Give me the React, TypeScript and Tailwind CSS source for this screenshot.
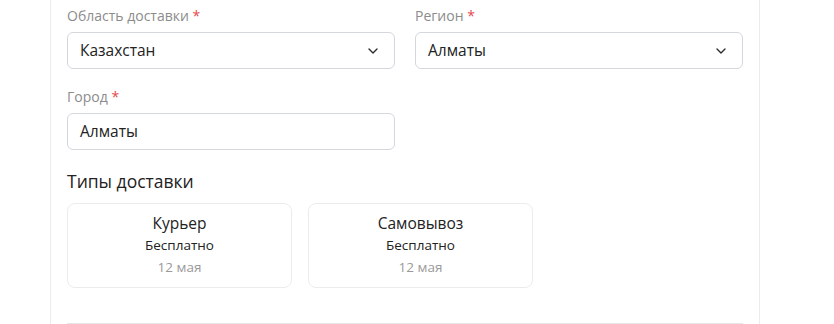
import React from "react";

const font = { fontFamily: '"Open Sans", "Noto Sans", sans-serif' };

function Chevron() {
  return (
    <svg width="16" height="16" viewBox="0 0 24 24" fill="none" stroke="#2b2b2b" strokeWidth="2" strokeLinecap="round" strokeLinejoin="round">
      <path d="m6 9 6 6 6-6" />
    </svg>
  );
}

function Label({ text }: { text: string }) {
  return (
    <div className="h-5 text-sm leading-5 text-[#8c8c8c] mb-[6px]">
      {text} <span className="text-[#e5484d]">*</span>
    </div>
  );
}

function SelectField({ label, value }: { label: string; value: string }) {
  return (
    <div>
      <Label text={label} />
      <div className="h-[37px] rounded-md border border-[#d4d7dc] pl-3 pr-[13px] flex items-center justify-between text-[15.5px] text-[#222]">
        <span>{value}</span>
        <Chevron />
      </div>
    </div>
  );
}

function InputField({ label, value }: { label: string; value: string }) {
  return (
    <div>
      <Label text={label} />
      <div className="h-[37px] rounded-md border border-[#d4d7dc] px-3 flex items-center text-[15.5px] text-[#222]">
        {value}
      </div>
    </div>
  );
}

function Card({ title }: { title: string }) {
  return (
    <div className="w-[225px] h-[85px] rounded-lg border border-[#ececec] flex flex-col items-center pt-[7px]">
      <div className="text-[15.5px] leading-6 text-[#222]">{title}</div>
      <div className="text-[13.5px] leading-5 text-[#222]">Бесплатно</div>
      <div className="text-[13.5px] leading-5 mt-[2px] text-[#9a9a9a]">12 мая</div>
    </div>
  );
}

export default function App() {
  return (
    <div className="w-[834px] h-[324px] bg-white overflow-hidden" style={font}>
      <div className="ml-[50px] w-[710px] h-full border-x border-[#ececec] px-4 pt-[6px]">
        <div className="grid grid-cols-2 gap-x-5 gap-y-[18px]">
          <SelectField label="Область доставки" value="Казахстан" />
          <SelectField label="Регион" value="Алматы" />
          <InputField label="Город" value="Алматы" />
        </div>
        <div className="mt-[17px] text-[17.5px] leading-7 text-[#222]">Типы доставки</div>
        <div className="mt-2 flex gap-4">
          <Card title="Курьер" />
          <Card title="Самовывоз" />
        </div>
        <div className="mt-[35px] border-t border-[#e6e6e6]" />
      </div>
    </div>
  );
}
